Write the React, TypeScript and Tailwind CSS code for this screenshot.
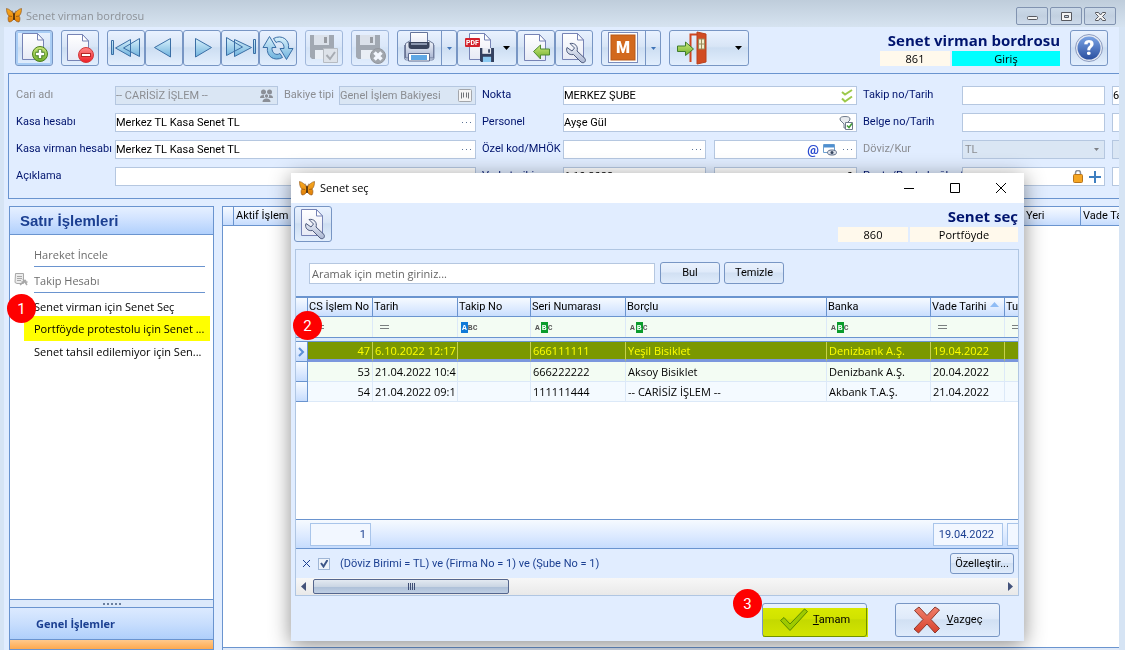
import type { ReactNode } from "react";

const FONT = "font-['Roboto','Noto_Sans',sans-serif]";
const HUMANIST = "font-['Open_Sans','Noto_Sans',sans-serif]";
const TOOL =
  "flex h-9 shrink-0 items-center rounded-[3px] border border-[#7896c4] bg-[linear-gradient(#e9f2ff_0%,#d8e5f6_45%,#cddef2_50%,#e2eefd_100%)]";
const PUSH =
  "flex items-center justify-center rounded-[3px] border border-[#7896c4] bg-[linear-gradient(#eaf2fd_0%,#dfeafa_45%,#d1e0f3_50%,#dfebfb_100%)] text-black";
const HEAD = "bg-[linear-gradient(#f6faff,#dbe9ff_60%,#c6dcfd)]";

export default function App() {
  return (
    <main
      className={`relative flex h-screen w-full flex-col overflow-hidden bg-[#d6e4f4] text-[11px] leading-4 text-[#00146e] ${FONT}`}
    >
      <TitleBar />

      <section className="ml-1 mr-1.5 flex min-h-0 flex-1 flex-col overflow-hidden bg-[#e1edff]">
        <Toolbar />
        <FormPanel />

        <div className="mt-[7px] flex min-h-0 flex-1 gap-2 pl-[5px]">
          <SidePanel />
          <MainGrid />
        </div>
      </section>

      <SenetDialog />
      <Marker className="left-[7px] top-[294px]">1</Marker>
    </main>
  );
}

function TitleBar() {
  return (
    <header className="flex h-[27px] shrink-0 items-center bg-[linear-gradient(#bfcddb,#d6e3f0)] pl-[6px] pr-[9px] pt-1">
      <Butterfly />
      <h1 className={`ml-1 text-[11px] text-[#8d9298] ${HUMANIST}`}>Senet virman bordrosu</h1>
      <div className="ml-auto flex gap-0.5">
        <CaptionButton label="Simge durumuna küçült">
          <rect x="10.5" y="8.5" width="10" height="3" rx="1" />
        </CaptionButton>
        <CaptionButton label="Ekranı kapla">
          <path d="M10.500 4.500h10v8h-10zM13.500 7.500h4v2h-4z" fillRule="evenodd" />
        </CaptionButton>
        <CaptionButton label="Kapat">
          <path d="M10.500 4.500h3l2 2.500 2-2.500h3v1l-3 3 3 3v1h-3l-2-2.500-2 2.500h-3v-1l3-3-3-3z" />
        </CaptionButton>
      </div>
    </header>
  );
}

function CaptionButton({ label, children }: { label: string; children: ReactNode }) {
  return (
    <button
      type="button"
      aria-label={label}
      className="h-[18px] w-8 rounded-[2px] border border-[#8193b0] bg-[linear-gradient(#cbd9e8,#c2d0e0_50%,#cddaea)]"
    >
      <svg width="31" height="17" viewBox="0 0 31 17" fill="#f3f3f3" stroke="#56585f" className="block">
        {children}
      </svg>
    </button>
  );
}

function Toolbar() {
  return (
    <div className="flex h-[46px] shrink-0 pl-[11px] pr-[11px] pt-[3px]">
      <div className="flex gap-2">
        <Tool label="Yeni" active>
          <Doc x={6} y={2} />
          <circle cx="24" cy="23" r="7.500" fill="url(#green)" stroke="#4b7d20" />
          <path d="M24 18.500v9M19.500 23h9" stroke="#3f7420" strokeWidth="4.500" />
          <path d="M24 19v8M20 23h8" stroke="#fff" strokeWidth="2.500" />
        </Tool>
        <Tool label="Sil">
          <Doc x={5} y={3} />
          <circle cx="24" cy="24" r="7.500" fill="url(#red)" stroke="#d43a3a" />
          <rect x="19.500" y="22.500" width="9" height="3" fill="#fff" stroke="#b52626" />
        </Tool>

        <div className="flex">
          <Tool label="İlk kayıt">
            <g fill="url(#blue)" stroke="#3a6ea5" strokeLinejoin="round">
              <path d="M3.500 9.500h2v14h-2zM22.500 8.500v17L7.500 17zM31.500 7.500v18L15.500 17z" />
            </g>
          </Tool>
          <Tool label="Önceki kayıt">
            <path d="M24.500 7.500v18.500L8.500 16.500z" fill="url(#blue)" stroke="#3a6ea5" />
          </Tool>
          <Tool label="Sonraki kayıt">
            <path d="M11.500 7.500v18.500L27.500 16.500z" fill="url(#blue)" stroke="#3a6ea5" />
          </Tool>
          <Tool label="Son kayıt">
            <g fill="url(#blue)" stroke="#3a6ea5" strokeLinejoin="round">
              <path d="M31.500 8.500h2v14h-2zM12.500 8.500v17L29.500 16.500zM4.500 6.500v18L20.500 16z" />
            </g>
          </Tool>
          <Tool label="Yenile">
            <g fill="url(#blue)" stroke="#3a6ea5" strokeLinejoin="round">
              <path d="M22.500 26.500C14 31 6 25 7.500 16.500H3L9.500 5.500l6.500 11h-4c-.5 5.500 4 8.500 8 6z" />
              <path d="M13.500 7.500C22 3 30 9 28.500 17.500H33l-6.500 11-6.500-11h4c.5-5.500-4-8.500-8-6z" />
            </g>
          </Tool>
        </div>

        <Tool label="Kaydet" disabled>
          <Floppy x={4} y={4} size={24} gray />
          <path d="M17.500 17.500h14v14h-14z" fill="#dcdcdc" stroke="#9a9a9a" />
          <path d="M20.500 24l3.500 4 5-7" fill="none" stroke="#808080" strokeWidth="2" />
        </Tool>
        <Tool label="Kaydetmeden çık" disabled>
          <Floppy x={4} y={4} size={24} gray />
          <circle cx="26" cy="25" r="7.500" fill="#777" stroke="#5f5f5f" />
          <path d="M22.500 21.500l7 7M29.500 21.500l-7 7" stroke="#fff" strokeWidth="3.500" />
        </Tool>

        <div className="flex">
          <button type="button" aria-label="Yazdır" className={`${TOOL} w-15`}>
            <svg width="43" height="34" viewBox="0 0 43 34" className="shrink-0">
              <path d="M7.500 12.500l5-3h18l5 3v14.500h-28z" fill="url(#steel)" stroke="#6c7896" strokeLinejoin="round" />
              <path d="M6.500 14v13q0 2 2 2H34q2 0 2-2V14" fill="none" stroke="#7a86a6" />
              <path d="M12.500 1.500h17v11h-17z" fill="url(#paper)" stroke="#65749b" />
              <path d="M10.500 11h21v4q0 3-3 3h-15q-3 0-3-3z" fill="#39435c" />
              <path d="M13 12h16v2H13z" fill="#8b96ae" />
              <path d="M10.500 22.500h21v7.500h-21z" fill="#fff" stroke="#5d6b90" />
              <path d="M13 24h16v5H13z" fill="#5fa7e4" />
            </svg>
            <span className="flex h-full flex-1 items-center justify-center border-l border-[#7896c4]">
              <DownArrow color="#3f73b7" small />
            </span>
          </button>
          <button type="button" aria-label="PDF olarak kaydet" className={`${TOOL} w-15`}>
            <svg width="45" height="34" viewBox="0 0 45 34" className="shrink-0">
              <Doc x={11} y={2} />
              <rect x="7" y="7" width="15" height="9" rx="1" fill="#d3202b" />
              <text x="14.500" y="14" fontSize="7" fontWeight="700" fill="#fff" textAnchor="middle">
                PDF
              </text>
              <Floppy x={22} y={17} size={14} />
            </svg>
            <DownArrow color="#000" />
          </button>
          <Tool label="Aktar">
            <Doc x={6} y={3} />
            <path d="M15.500 20.500l7-6.500v4h9v6h-9v4z" fill="url(#green)" stroke="#4e8a32" />
          </Tool>
          <Tool label="Ayarlar">
            <Wrench />
          </Tool>
        </div>

        <button type="button" aria-label="Mikro" className={`${TOOL} w-15`}>
          <svg width="43" height="34" viewBox="0 0 43 34" className="shrink-0">
            <rect x="6.500" y="1.500" width="29" height="30" fill="#fff" stroke="#7b8cbb" />
            <rect x="9" y="4" width="24" height="25" fill="#d2691e" stroke="#b95a19" />
            <text x="21" y="22" fontSize="16" fontWeight="900" fill="#fff" textAnchor="middle">
              M
            </text>
          </svg>
          <span className="flex h-full flex-1 items-center justify-center border-l border-[#7896c4]">
            <DownArrow color="#3f73b7" small />
          </span>
        </button>

        <button type="button" aria-label="Çıkış" className={`${TOOL} w-20`}>
          <svg width="65" height="34" viewBox="0 0 65 34" className="shrink-0">
            <path d="M20.500 31V3.500H27" fill="none" stroke="#cf4520" strokeWidth="2" />
            <path d="M27 1l9 2v28l-9 2z" fill="#d14b22" stroke="#b9401c" />
            <path d="M28.500 8h6v10h-6zM31.500 8v10M28.500 13h6" fill="#f3eecb" stroke="#9a8a5c" />
            <path d="M7.500 15h8v-4l8 7-8 6.500v-4h-8z" fill="url(#green)" stroke="#3f7c2c" />
          </svg>
          <DownArrow color="#000" />
        </button>
      </div>

      <div className="ml-auto flex gap-2.5">
        <Heading title="Senet virman bordrosu" code="861" status="Giriş" tone="bg-[#00ffff]" />
        <Tool label="Yardım">
          <circle cx="18" cy="17" r="13.500" fill="#e3e8f2" stroke="#8c9cc0" />
          <circle cx="18" cy="17" r="11.500" fill="url(#help)" />
          <text x="18" y="24" fontSize="20" fontWeight="900" fill="#fff" textAnchor="middle">
            ?
          </text>
        </Tool>
      </div>

      <svg width="0" height="0" className="absolute">
        <defs>
          <Gradient id="green" from="#cdea7c" to="#6fae2a" />
          <Gradient id="red" from="#ff8b8b" to="#ee1c25" />
          <Gradient id="blue" from="#d9f1fb" to="#6eb2dd" />
          <Gradient id="steel" from="#f4f7fc" to="#aab6d2" />
          <Gradient id="paper" from="#ffffff" to="#e7eaf5" />
          <Gradient id="help" from="#7aa3e4" to="#2a4f9f" />
          <Gradient id="butterfly" from="#f9ab22" to="#e07f08" />
          <Gradient id="cross" from="#f0806c" to="#d8412c" />
        </defs>
      </svg>
    </div>
  );
}

function Gradient({ id, from, to }: { id: string; from: string; to: string }) {
  return (
    <linearGradient id={id} x1="0" y1="0" x2="0" y2="1">
      <stop offset="0" stopColor={from} />
      <stop offset="1" stopColor={to} />
    </linearGradient>
  );
}

type ToolProps = { label: string; active?: boolean; disabled?: boolean; children: ReactNode };

function Tool({ label, active, disabled, children }: ToolProps) {
  return (
    <button
      type="button"
      aria-label={label}
      disabled={disabled}
      className={`${TOOL} w-[38px] ${active ? "shadow-[inset_0_0_0_2px_#a9cdf5]" : ""} ${
        disabled ? "opacity-60" : ""
      }`}
    >
      <svg width="36" height="34" viewBox="0 0 36 34" className="shrink-0">
        {children}
      </svg>
    </button>
  );
}

function Heading({ title, code, status, tone }: { title: string; code: string; status: string; tone: string }) {
  return (
    <div className={`text-right ${HUMANIST}`}>
      <h2 className="h-[21px] text-[15px] font-bold leading-[21px] text-[#00146e]">{title}</h2>
      <div className="flex justify-end gap-0.5 text-center leading-[15px] text-black">
        <span className="w-[70px] bg-[#fff9ec]">{code}</span>
        <span className={`w-[108px] ${tone}`}>{status}</span>
      </div>
    </div>
  );
}

function FormPanel() {
  return (
    <form className="ml-1 flex shrink-0 overflow-hidden border border-r-0 border-[#6a94cf] pb-3 pl-[7px] pt-3">
      <div className="flex w-[460px] shrink-0 flex-col gap-2">
        <div className="flex">
          <Label id="cari" dim>Cari adı</Label>
          <Field id="cari" value="-- CARİSİZ İŞLEM --" disabled className="w-[163px]">
            <PeopleIcon />
          </Field>
          <label htmlFor="bakiye" className="ml-1.5 w-[55px] shrink-0 whitespace-nowrap leading-[18px] text-[#8b8d92]">
            Bakiye tipi
          </label>
          <Field id="bakiye" value="Genel İşlem Bakiyesi" disabled className="flex-1">
            <svg width="14" height="13" viewBox="0 0 14 13">
              <rect x=".5" y=".5" width="13" height="12" rx="1" fill="#f4f4f4" stroke="#a3a6ab" />
              <path d="M3.500 3.500v6M5.500 3.500v5M8.500 3.500v5M10.500 3.500v6" stroke="#6f7277" />
            </svg>
          </Field>
        </div>
        <div className="flex">
          <Label id="kasa">Kasa hesabı</Label>
          <Field id="kasa" value="Merkez TL Kasa Senet TL" className="flex-1"><Dots /></Field>
        </div>
        <div className="flex">
          <Label id="virman">Kasa virman hesabı</Label>
          <Field id="virman" value="Merkez TL Kasa Senet TL" className="flex-1"><Dots /></Field>
        </div>
        <div className="flex">
          <Label id="aciklama">Açıklama</Label>
          <Field id="aciklama" className="flex-1" />
        </div>
      </div>

      <div className="ml-1.5 flex w-[375px] shrink-0 flex-col gap-2">
        <div className="flex">
          <Label id="nokta" narrow>Nokta</Label>
          <Field id="nokta" value="MERKEZ ŞUBE" className="flex-1">
            <svg width="12" height="14" viewBox="0 0 12 14" fill="none" stroke="#9cc94a" strokeWidth="2">
              <path d="M1 3l3 2.500L11 1M1 9.500l3 3L11 7.500" />
            </svg>
          </Field>
        </div>
        <div className="flex">
          <Label id="personel" narrow>Personel</Label>
          <Field id="personel" value="Ayşe Gül" className="flex-1">
            <svg width="14" height="14" viewBox="0 0 14 14" fill="#e8ebef" stroke="#6e7a8b">
              <ellipse cx="6" cy="3" rx="5" ry="2.500" />
              <path d="M1 4l4 4v4h2V8l4-4" />
              <path d="M6.500 6.500h7v7h-7z" fill="#fff" />
              <path d="M8 9.500l2 2 3-4" fill="none" stroke="#3f9a35" strokeWidth="1.500" />
            </svg>
          </Field>
        </div>
        <div className="flex gap-2">
          <div className="flex w-56 shrink-0">
            <Label id="ozel" narrow>Özel kod/MHÖK</Label>
            <Field id="ozel" className="flex-1"><Dots /></Field>
          </div>
          <Field label="MHÖK" className="flex-1">
            <b className="mr-1 text-[13px] text-[#2748d0]">@</b>
            <svg width="14" height="12" viewBox="0 0 14 12" className="mr-1.5">
              <path d="M.5.5h11v8H.5z" fill="#fff" stroke="#6c9fd0" />
              <path d="M1 2h10" stroke="#4e8fd0" strokeWidth="3" />
              <ellipse cx="9" cy="8.500" rx="4.500" ry="2.500" fill="#dbe1ea" stroke="#5d6c86" />
              <circle cx="9" cy="8.500" r="1.500" fill="#38465f" />
            </svg>
            <Dots />
          </Field>
        </div>
        <div className="flex gap-2">
          <div className="flex w-56 shrink-0">
            <Label id="vade" narrow>Vade tarihi</Label>
            <Field id="vade" value="6.10.2022" className="flex-1" />
          </div>
          <Field label="Gün" value="0" right className="flex-1" />
        </div>
      </div>

      <div className="ml-1.5 flex w-[242px] shrink-0 flex-col gap-2">
        <div className="flex">
          <Label id="takip">Takip no/Tarih</Label>
          <Field id="takip" className="flex-1" />
        </div>
        <div className="flex">
          <Label id="belge">Belge no/Tarih</Label>
          <Field id="belge" className="flex-1" />
        </div>
        <div className="flex">
          <Label id="doviz" dim>Döviz/Kur</Label>
          <div className="relative flex-1">
            <select
              id="doviz"
              disabled
              className="block h-[19px] w-full appearance-none border border-[#b5c7e0] bg-[#dae6f4] px-0.5 text-[#8b8d92] opacity-100"
            >
              <option>TL</option>
            </select>
            <span className="absolute right-1.5 top-2"><DownArrow color="#7d7f84" small /></span>
          </div>
        </div>
        <div className="flex">
          <Label id="proje">Posta/Posta bağlantı</Label>
          <Field id="proje" className="flex-1">
            <svg width="10" height="13" viewBox="0 0 10 13">
              <path d="M2.500 5V3q0-2.500 2.500-2.500T7.500 3v2" fill="none" stroke="#8b8f98" strokeWidth="1.500" />
              <rect x=".5" y="4.500" width="9" height="8" rx="1" fill="#f5a623" stroke="#b8741b" />
            </svg>
            <svg width="12" height="12" viewBox="0 0 12 12" className="ml-1.5">
              <path d="M6 0v12M0 6h12" stroke="#3f7fc0" strokeWidth="2" />
            </svg>
          </Field>
        </div>
      </div>

      <div className="ml-[7px] flex w-32 shrink-0 flex-col gap-2">
        <Field label="Takip tarihi" value="6.10.2022" />
        <Field label="Belge tarihi" />
        <Field label="Kur" disabled />
        <Field label="Bağlantı" />
      </div>
    </form>
  );
}

type LabelProps = { id: string; dim?: boolean; narrow?: boolean; children: ReactNode };

function Label({ id, dim, narrow, children }: LabelProps) {
  return (
    <label
      htmlFor={id}
      className={`shrink-0 whitespace-nowrap leading-[18px] ${narrow ? "w-[81px]" : "w-[99px]"} ${
        dim ? "text-[#8b8d92]" : "text-[#00146e]"
      }`}
    >
      {children}
    </label>
  );
}

type FieldProps = {
  id?: string;
  label?: string;
  value?: string;
  disabled?: boolean;
  right?: boolean;
  className?: string;
  children?: ReactNode;
};

function Field({ id, label, value, disabled, right, className = "", children }: FieldProps) {
  return (
    <div
      className={`flex h-[19px] min-w-0 items-center border border-[#b5c7e0] pr-[3px] ${
        disabled ? "bg-[#dae6f4] text-[#8b8d92]" : "bg-white text-black"
      } ${className}`}
    >
      <input
        id={id}
        aria-label={label}
        defaultValue={value}
        disabled={disabled}
        className={`h-4 min-w-0 flex-1 outline-none ${right ? "text-right" : ""}`}
      />
      {children}
    </div>
  );
}

function SidePanel() {
  return (
    <aside className="flex w-[205px] shrink-0 flex-col border border-[#6a94cf] bg-white">
      <h2 className="h-7 border-b border-[#6a94cf] bg-[linear-gradient(#e6f0ff,#d3e4ff_40%,#b1d0fc)] pl-2.5 font-['Liberation_Sans',sans-serif] text-[15px] font-bold leading-[27px] text-[#1b3f91]">
        Satır İşlemleri
      </h2>
      <nav className={`flex flex-1 flex-col pl-6 pr-[3px] pt-3 text-[11px] text-black ${HUMANIST}`}>
        <a href="#hareket" className="mr-[5px] border-b border-[#6a94cf] pb-[3px] text-[#6d6d6d]">
          Hareket İncele
        </a>
        <a href="#takip-hesabi" className="relative mr-[5px] mt-[6px] border-b border-[#6a94cf] pb-[3px] text-[#6d6d6d]">
          <svg width="15" height="15" viewBox="0 0 15 15" className="absolute -left-5 top-0" fill="#ececec" stroke="#a8a8a8">
            <path d="M1.500.5h8v10H3L1 9.500z" />
            <path d="M3 3.500h5M3 5.500h5M3 7.500h4" />
            <path d="M6 12l6-5M9 6l4 6M7.500 9h6" strokeWidth="1.500" />
          </svg>
          Takip Hesabı
        </a>
        <a href="#senet-sec" className="mt-1 leading-[19px]">Senet virman için Senet Seç</a>
        <a href="#protestolu" className="-ml-2.5 whitespace-nowrap bg-[#ffff00] pl-2.5 leading-[25px]">
          Portföyde protestolu için Senet ...
        </a>
        <a href="#tahsil" className="whitespace-nowrap leading-[21px]">Senet tahsil edilemiyor için Sen...</a>
      </nav>
      <div className="flex h-2 shrink-0 items-center justify-center gap-0.5 border-t border-[#6a94cf] bg-[#dce9fb]">
        {[0, 1, 2, 3, 4].map((dot) => (
          <i key={dot} className="size-0.5 bg-[#6b7f9e]" />
        ))}
      </div>
      <button
        type="button"
        className={`h-8 shrink-0 border-t border-[#6a94cf] bg-[linear-gradient(#dceaff,#c8defd_50%,#afcffb)] pl-[26px] text-left font-bold text-[#1b3f91] ${HUMANIST}`}
      >
        Genel İşlemler
      </button>
      <div className="h-[10px] shrink-0 border-t border-[#6a94cf] bg-[linear-gradient(#ffc98c,#fda94f)]" />
    </aside>
  );
}

function MainGrid() {
  return (
    <section className="flex min-w-0 flex-1 flex-col border border-r-0 border-b-0 border-[#6a94cf] bg-white">
      <div className={`flex h-[19px] shrink-0 whitespace-nowrap border-b border-[#6a94cf] leading-[18px] text-black ${HEAD}`}>
        <span className="w-[11px] border-r border-[#6a94cf]" />
        <span className="w-[694px] pl-0.5">Aktif İşlem Adı</span>
        <span className="w-[153px] border-r border-[#6a94cf] text-left">
          <span className="pl-[98px]">Yeri</span>
        </span>
        <span className="flex-1 overflow-hidden pl-0.5">Vade Tarihi</span>
      </div>
      <div className="flex-1" />
      <div className="h-[3px] shrink-0 border-t border-[#6a94cf] bg-[#dfe9f8]" />
    </section>
  );
}

const columns = [
  { title: "CS İşlem No", width: "w-[65px]", filter: "eq" },
  { title: "Tarih", width: "w-[85px]", filter: "eq" },
  { title: "Takip No", width: "w-[73px]", filter: "start" },
  { title: "Seri Numarası", width: "w-[95px]", filter: "mid" },
  { title: "Borçlu", width: "w-[201px]", filter: "mid" },
  { title: "Banka", width: "w-[104px]", filter: "mid" },
  { title: "Vade Tarihi", width: "w-[74px]", filter: "eq" },
  { title: "Tu", width: "", filter: "eq" },
];

const rows = [
  ["47", "6.10.2022 12:17", "", "666111111", "Yeşil Bisiklet", "Denizbank A.Ş.", "19.04.2022", ""],
  ["53", "21.04.2022 10:4", "", "666222222", "Aksoy Bisiklet", "Denizbank A.Ş.", "20.04.2022", ""],
  ["54", "21.04.2022 09:1", "", "111111444", "-- CARİSİZ İŞLEM --", "Akbank T.A.Ş.", "21.04.2022", ""],
];

function rowTone(index: number) {
  if (index === 0) return "border-b-[3px] border-b-[#7b97dd] border-r-[#c6d24a] bg-[#7b9800] text-[#ffff00]";
  if (index === 1) return "border-b border-[#dce9f8] bg-[#f3fcf3] text-black";
  return "border-b border-[#dce9f8] bg-[#f4faff] text-black";
}

function SenetDialog() {
  return (
    <section
      role="dialog"
      aria-labelledby="dialog-title"
      className="absolute left-[291px] right-[101px] top-[173px] flex h-[468px] flex-col bg-[#e1edff] shadow-[0_4px_20px_rgba(0,0,0,0.45)]"
    >
      <header className="flex h-[30px] shrink-0 items-center bg-white pl-2 text-black">
        <Butterfly />
        <h2 id="dialog-title" className={`ml-[5px] text-[11px] ${HUMANIST}`}>Senet seç</h2>
        <div className="ml-auto flex">
          <DialogButton label="Küçült"><path d="M0 5.500h10" /></DialogButton>
          <DialogButton label="Büyüt"><path d="M.5.5h9v9h-9z" /></DialogButton>
          <DialogButton label="Kapat"><path d="M0 0l10 10M10 0L0 10" /></DialogButton>
        </div>
      </header>

      <div className="flex h-[46px] shrink-0 items-start justify-between pl-[3px] pr-1.5 pt-[3px]">
        <Tool label="Ayarlar"><Wrench /></Tool>
        <Heading title="Senet seç" code="860" status="Portföyde" tone="bg-[#fff9ec]" />
      </div>

      <div className="ml-1 mr-[5px] flex h-[347px] shrink-0 flex-col border border-[#b0c6e2]">
        <div className="flex h-[46px] shrink-0 items-center gap-1 pl-[13px]">
          <input
            aria-label="Arama metni"
            placeholder="Aramak için metin giriniz..."
            className={`mr-px h-[21px] w-[346px] border border-[#b5c7e0] bg-white px-0.5 text-black placeholder:text-[#666] ${HUMANIST}`}
          />
          <button type="button" className={`${PUSH} h-[22px] w-15`}>Bul</button>
          <button type="button" className={`${PUSH} h-[22px] w-15`}>Temizle</button>
        </div>

        <div className="min-h-0 flex-1 overflow-hidden bg-white">
          <SenetTable />
        </div>

        <div className={`flex h-[30px] shrink-0 items-center border-y border-[#6a94cf] pl-[14px] text-right text-[#1b3f91] ${HEAD}`}>
          <span className="h-[23px] w-[61px] border border-[#a9c5ea] bg-[#f2f7ff] pr-1 leading-[22px]">1</span>
          <span className="ml-auto h-[23px] w-[70px] border border-[#a9c5ea] bg-[#f2f7ff] pr-2 leading-[22px]">19.04.2022</span>
          <span className="ml-1 h-[23px] w-[11px] border border-r-0 border-[#a9c5ea] bg-[#f2f7ff]" />
        </div>

        <div className="flex h-[29px] shrink-0 items-center pl-[7px] pr-1 text-[#1b3f91]">
          <button type="button" aria-label="Filtreyi kaldır">
            <svg width="7" height="7" viewBox="0 0 7 7" stroke="#1b3f91">
              <path d="M0 0l7 7M7 0L0 7" />
            </svg>
          </button>
          <label className="relative ml-2 flex items-center">
            <input type="checkbox" defaultChecked className="size-3 appearance-none border border-[#9fb6d6] bg-[#eef3fa]" />
            <svg width="8" height="8" viewBox="0 0 8 8" className="absolute left-0.5" fill="none" stroke="#3d5687" strokeWidth="2">
              <path d="M1 3l2.500 3.500L7.500 0" />
            </svg>
            <span className="ml-2.5">(Döviz Birimi = TL) ve (Firma No = 1) ve (Şube No = 1)</span>
          </label>
          <button type="button" className={`${PUSH} ml-auto h-[21px] w-16`}>Özelleştir...</button>
        </div>

        <div className="flex h-[17px] shrink-0 items-center gap-[7px] bg-[linear-gradient(#f7f7f7,#e9e9e9)] px-[5px]">
          <button type="button" aria-label="Sola kaydır">
            <svg width="5" height="9" viewBox="0 0 5 9" fill="#43527a"><path d="M5 0v9L0 4.500z" /></svg>
          </button>
          <div className="flex h-[15px] w-[196px] items-center justify-center gap-px rounded-[2px] border border-[#55668d] bg-[linear-gradient(#e3e9f1_0%,#cbd6e4_50%,#aec0d8_55%,#bfcfe4_100%)]">
            {[0, 1, 2, 3].map((bar) => (
              <i key={bar} className="h-[7px] w-px bg-[#3e4d74]" />
            ))}
          </div>
          <button type="button" aria-label="Sağa kaydır" className="ml-auto">
            <svg width="5" height="9" viewBox="0 0 5 9" fill="#43527a"><path d="M0 0v9l5-4.500z" /></svg>
          </button>
        </div>
      </div>

      <footer className="flex flex-1 items-start justify-end gap-7 pr-6 pt-[7px]">
        <button type="button" className={`${PUSH} relative h-[34px] w-[105px]`}>
          <svg width="30" height="24" viewBox="0 0 30 24" className="mr-1">
            <path
              d="M1.500 12.500l3.500-3 6 6.500L25.500 1l3 2.500L11 22.500z"
              fill="#a8d060"
              stroke="#5d8d2c"
              strokeLinejoin="round"
            />
          </svg>
          <span><u>T</u>amam</span>
          <i className="absolute -bottom-px -right-0.5 left-0 top-1 bg-[#f0f800] mix-blend-multiply" />
        </button>
        <button type="button" className={`${PUSH} h-[34px] w-[105px]`}>
          <svg width="28" height="28" viewBox="0 0 28 28" className="mr-1.5">
            <path
              d="M1.500 4.500l4.500-3.500 8 8.500 8-8.500 4.500 3-8.500 9.500 8.500 9-4.500 4.500-8-9-8.500 9-4.500-4 9-9.500z"
              fill="url(#cross)"
              stroke="#8c3a2e"
              strokeLinejoin="round"
            />
          </svg>
          <span><u>V</u>azgeç</span>
        </button>
      </footer>

      <Marker className="left-[2px] top-[138px]">2</Marker>
      <Marker className="left-[442px] top-[416px]">3</Marker>
    </section>
  );
}

function SenetTable() {
  return (
    <table className="w-full table-fixed border-separate border-spacing-0 border-t-2 border-[#6a94cf] text-left text-black">
      <thead>
        <tr className={`h-[19px] ${HEAD}`}>
          <th aria-label="Satır" className="w-3 border-b border-r border-[#6a94cf] p-0" />
          {columns.map((col) => (
            <th
              key={col.title}
              className={`overflow-hidden whitespace-nowrap border-b border-r border-[#6a94cf] p-0 pl-px font-normal last:border-r-0 ${col.width}`}
            >
              {col.title}
              {col.title === "Vade Tarihi" && (
                <svg width="9" height="5" viewBox="0 0 9 5" fill="#8fbcf5" className="ml-1 inline align-[3px]">
                  <path d="M4.500 0L9 5H0z" />
                </svg>
              )}
            </th>
          ))}
        </tr>
      </thead>
      <tbody>
        <tr className="h-5 bg-[#f3fcf3]">
          <td className={`border-r border-[#6a94cf] p-0 ${HEAD}`} />
          {columns.map((col) => (
            <td key={col.title} className="overflow-hidden border-r border-[#dce9f8] p-0 pl-[3px] last:border-r-0">
              <FilterIcon kind={col.filter} />
            </td>
          ))}
        </tr>
        <tr className="h-[5px]">
          <td colSpan={9} className="border-y border-[#6a94cf] bg-[#dceafb] p-0" />
        </tr>
        {rows.map((row, index) => (
          <tr key={row[0]} className="h-5">
            <td className={`border-b border-r border-[#6a94cf] p-0 ${HEAD}`}>
              {index === 0 && (
                <svg width="7" height="10" viewBox="0 0 7 10" fill="none" stroke="#5b8fd6" strokeWidth="2" className="ml-0.5">
                  <path d="M1 1l4 4-4 4" />
                </svg>
              )}
            </td>
            {row.map((value, cell) => (
              <td
                key={columns[cell].title}
                className={`overflow-hidden whitespace-nowrap border-r p-0 leading-4 last:border-r-0 ${
                  cell === 0 ? "pr-0.5 text-right" : "pl-0.5"
                } ${HUMANIST} ${rowTone(index)}`}
              >
                {value}
              </td>
            ))}
          </tr>
        ))}
      </tbody>
    </table>
  );
}

function FilterIcon({ kind }: { kind: string }) {
  if (kind === "eq") {
    return (
      <svg width="9" height="4" viewBox="0 0 9 4" stroke="#7a7f80" className="ml-1">
        <path d="M0 .5h9M0 3.500h9" />
      </svg>
    );
  }

  return (
    <span className="flex items-center font-['Liberation_Mono',monospace] text-[8px] font-bold leading-[11px] text-[#555]">
      <span className={kind === "start" ? "bg-[#0f7ad8] px-px text-white" : "px-px"}>A</span>
      <span className={kind === "mid" ? "bg-[#0a9c2c] px-px text-white" : ""}>B</span>
      <span>C</span>
    </span>
  );
}

function DialogButton({ label, children }: { label: string; children: ReactNode }) {
  return (
    <button type="button" aria-label={label} className="flex h-[30px] w-[46px] items-center justify-center">
      <svg width="10" height="10" viewBox="0 0 10 10" fill="none" stroke="#000">
        {children}
      </svg>
    </button>
  );
}

function Marker({ className, children }: { className: string; children: ReactNode }) {
  return (
    <span
      className={`absolute flex size-[29px] items-center justify-center rounded-full bg-[#fe0000] text-[15px] text-white ${className}`}
    >
      {children}
    </span>
  );
}

function Dots() {
  return (
    <svg width="9" height="2" viewBox="0 0 9 2" fill="#5b7396" className="mr-px shrink-0">
      <path d="M0 0h1v1H0zM4 0h1v1H4zM8 0h1v1H8z" />
    </svg>
  );
}

function DownArrow({ color, small }: { color: string; small?: boolean }) {
  return (
    <svg width={small ? 5 : 7} height={small ? 3 : 4} viewBox="0 0 7 4" fill={color} className="shrink-0">
      <path d="M0 0h7L3.500 4z" />
    </svg>
  );
}

function Doc({ x, y }: { x: number; y: number }) {
  return (
    <g transform={`translate(${x} ${y})`}>
      <path d="M.5.500h15l6 6.500v19.500H.5z" fill="url(#paper)" stroke="#7683b5" />
      <path d="M15.500.5v6.500h6z" fill="#fff" stroke="#7683b5" />
    </g>
  );
}

function Floppy({ x, y, size, gray }: { x: number; y: number; size: number; gray?: boolean }) {
  return (
    <svg x={x} y={y} width={size} height={size} viewBox="0 0 24 24">
      <path d="M0 0h24v24H2l-2-2z" fill={gray ? "#777b80" : "#33405f"} />
      <path d="M4 0h15v10H4z" fill={gray ? "#d8dadd" : "#e6eaf2"} />
      <path d="M14 2h3v6h-3z" fill={gray ? "#666" : "#33405f"} />
      <path d="M5 15h14v9H5z" fill={gray ? "#efefef" : "#8ccaf2"} />
    </svg>
  );
}

function Wrench() {
  return (
    <>
      <Doc x={6} y={2} />
      <path
        d="M14 12.500l4.500 4.500-2.500 3-5-3.500c-1.500 4 1.500 8 6.500 7l7.500 7.500c2.500 2 5.500-.5 4-3.500l-8-7.500c1.500-4.500-2-8.500-7-7.500z"
        fill="url(#steel)"
        stroke="#4d5a7c"
        strokeLinejoin="round"
      />
    </>
  );
}

function PeopleIcon() {
  return (
    <svg width="13" height="13" viewBox="0 0 13 13" fill="#8b8f97" className="mr-px">
      <circle cx="3.500" cy="3" r="2.500" />
      <circle cx="9.500" cy="3" r="2.500" />
      <path d="M0 9q0-3 3.500-3T7 9zM6 9q0-3 3.500-3T13 9z" />
      <circle cx="6.500" cy="7" r="2.200" stroke="#dae6f4" />
      <path d="M2.500 13q0-3.500 4-3.500t4 3.500z" />
    </svg>
  );
}

function Butterfly() {
  return (
    <svg width="16" height="15" viewBox="0 0 16 15" className="shrink-0">
      <path
        d="M8 7C6 3 3 1 .5.5c0 3 .5 6 2.500 7.500-1.500 1.500-1 4.500 0 6 2.500 0 4-1.500 5-4 1 2.500 2.500 4 5 4 1-1.500 1.500-4.500 0-6C15 6.500 15.500 3.500 15.500.5 13 1 10 3 8 7z"
        fill="url(#butterfly)"
        stroke="#8a4d10"
        strokeWidth=".6"
      />
      <path d="M8 5v7" stroke="#3a2208" strokeWidth="1.500" />
      <path d="M8 6L6 2.500M8 6l2-3.500M3 8l3 .5M13 8l-3 .5" stroke="#7a430d" strokeWidth=".6" />
    </svg>
  );
}
